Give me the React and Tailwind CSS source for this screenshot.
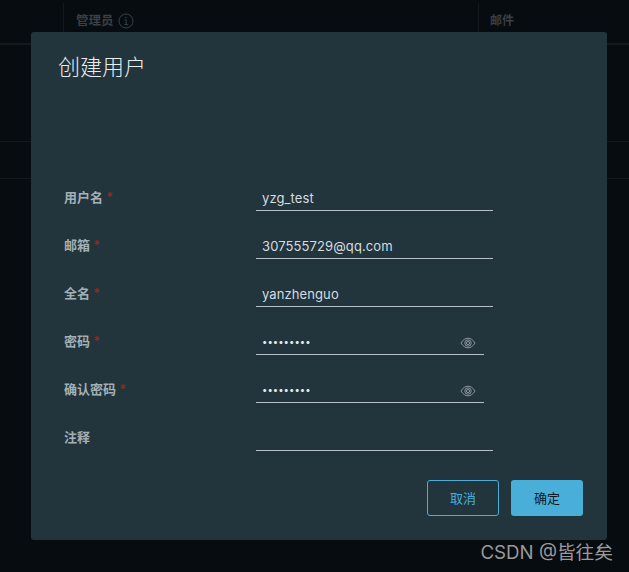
import React from "react";

const FONT = "font-['Inter','Noto_Sans_CJK_SC',sans-serif]";

function EyeIcon() {
  return (
    <svg width="16" height="12" viewBox="0 0 16 12" fill="none" stroke="#8b989e" strokeWidth="1" className="shrink-0">
      <path d="M1 6C3 2.8 5.3 1.2 8 1.2S13 2.8 15 6C13 9.2 10.7 10.8 8 10.8S3 9.2 1 6Z" />
      <circle cx="8" cy="6" r="3.2" />
      <circle cx="8" cy="6" r="1.6" />
    </svg>
  );
}

function InfoIcon() {
  return (
    <svg width="16" height="16" viewBox="0 0 16 16" fill="none" stroke="#3a4145" strokeWidth="1">
      <circle cx="8" cy="8" r="7" />
      <path d="M6.5 6.8H8.2V11.6M6.4 11.6H10" />
      <circle cx="7.9" cy="4.6" r="0.8" fill="#3a4145" stroke="none" />
    </svg>
  );
}

function Field({ label, required, value, password, last }) {
  return (
    <div className={`flex items-center ${last ? "" : "mb-6"}`}>
      <label className="-mt-[3px] w-[192px] text-[13px] font-bold text-[#a3b0b5]">
        {label}
        {required && <span className="ml-[3px] text-[#8c2a1f]">*</span>}
      </label>
      <div className={`flex h-6 items-center border-b border-[#b3c0c6] pl-[6px] ${password ? "w-[228px] pr-2" : "w-[237px]"}`}>
        <input
          readOnly
          type={password ? "password" : "text"}
          value={value}
          className={`w-full min-w-0 flex-1 bg-transparent outline-none ${password ? "text-[9.6px] text-[#e4eaec]" : "text-[13px] tracking-[0.1px] text-[#d5dde0]"}`}
        />
        {password && <EyeIcon />}
      </div>
    </div>
  );
}

export default function App() {
  return (
    <div className={`relative h-[572px] w-[629px] overflow-hidden bg-[#070c10] ${FONT}`}>
      {/* table behind the dialog */}
      <div className="h-[45px] border-b-2 border-[#15191c] pt-[3px]">
        <div className="flex h-[40px] pl-[63px]">
          <div className="flex w-[415px] items-center gap-1 border-l border-[#15191c] pb-1 pl-3 text-[12.5px] font-bold text-[#393f43]">
            管理员 <InfoIcon />
          </div>
          <div className="flex items-center border-l border-[#15191c] pb-1 pl-[11px] text-xs font-bold text-[#393f43]">邮件</div>
        </div>
      </div>
      <div className="mt-[96px] h-[38px] border-y border-[#15191c]" />

      {/* dialog */}
      <div className="absolute left-[31px] top-8 flex h-[508px] w-[576px] flex-col rounded-[3px] bg-[#22343c] pb-6 pl-[33px] pr-6 pt-5">
        <h2 className="-ml-[6px] text-[22px] font-light leading-[30px] text-[#e8edef]">创建用户</h2>
        <form className="mt-[105px]">
          <Field label="用户名" required value="yzg_test" />
          <Field label="邮箱" required value="307555729@qq.com" />
          <Field label="全名" required value="yanzhenguo" />
          <Field label="密码" required value="123456789" password />
          <Field label="确认密码" required value="123456789" password />
          <Field label="注释" value="" last />
        </form>
        <div className="mt-auto flex justify-end gap-3">
          <button className="h-9 w-[72px] rounded-[3px] border border-[#49afd9] pt-[2px] text-[13px] text-[#49afd9]">取消</button>
          <button className="h-9 w-[72px] rounded-[3px] bg-[#49afd9] pt-[2px] text-[13px] text-[#0a1a22]">确定</button>
        </div>
      </div>

      <div className="absolute right-4 top-[542px] text-[18.7px] leading-[22px] text-[#9a9a9a]">CSDN @皆往矣</div>
    </div>
  );
}
